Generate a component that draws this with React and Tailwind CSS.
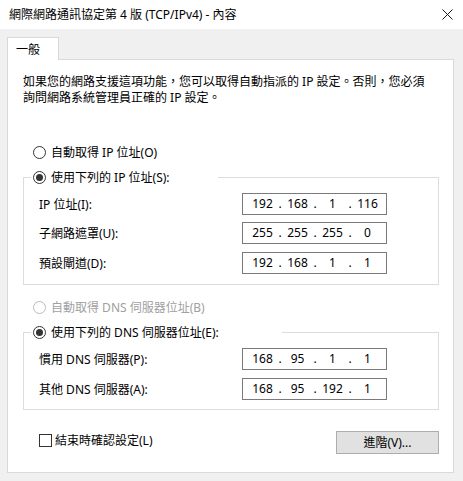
import React from "react";

function Radio({ checked, disabled }) {
  return (
    <span
      className={
        "flex h-[13px] w-[13px] shrink-0 items-center justify-center rounded-full border bg-white " +
        (disabled ? "border-[#bcbcbc]" : "border-[#333333]")
      }
    >
      {checked ? <span className="block h-[7px] w-[7px] rounded-full bg-[#333333]" /> : null}
    </span>
  );
}

function IpBox({ parts }) {
  return (
    <div className="flex h-[22px] w-[145px] items-center border border-[#7a7a7a] bg-white pl-[5px] text-[12px] leading-none text-black">
      {parts.map((p, i) => (
        <React.Fragment key={i}>
          {i > 0 ? <span className="w-[6px] text-center">.</span> : null}
          <span className="w-[29px] text-center">{p}</span>
        </React.Fragment>
      ))}
    </div>
  );
}

function FieldRow({ label, parts, className }) {
  return (
    <div className={"flex items-center justify-between pl-[15px] pr-[51px] " + (className || "")}>
      <span className="whitespace-nowrap">{label}</span>
      <IpBox parts={parts} />
    </div>
  );
}

export default function App() {
  return (
    <div className="h-[481px] w-[463px] overflow-hidden bg-[#f0f0f0] font-['Noto_Sans','Noto_Sans_CJK_TC',sans-serif] text-[12px] leading-[17px] text-black">
      {/* Title bar */}
      <div className="flex h-[29px] items-center justify-between bg-white pl-[9px] pr-[10px]">
        <span className="whitespace-nowrap text-[12px]">網際網路通訊協定第 4 版 (TCP/IPv4) - 內容</span>
        <svg width="11" height="11" viewBox="0 0 11 11">
          <path d="M0.5 0.5 L10.5 10.5 M10.5 0.5 L0.5 10.5" stroke="#1a1a1a" strokeWidth="1" fill="none" />
        </svg>
      </div>

      <div className="px-[7px] pt-[8px]">
        {/* Tab */}
        <div className="relative z-10 -mb-px flex h-[23px] w-[52px] items-center border border-b-0 border-[#d9d9d9] bg-white pl-[8px]">
          一般
        </div>
        {/* Panel */}
        <div className="h-[414px] w-[447px] border border-[#d9d9d9] bg-white pl-[15px] pr-[14px] pt-[14px]">
          <p className="whitespace-nowrap leading-[16px]">
            如果您的網路支援這項功能，您可以取得自動指派的 IP 設定。否則，您必須
            <br />
            詢問網路系統管理員正確的 IP 設定。
          </p>

          <div className="mt-[38px] flex h-[17px] items-center gap-[5px] pl-[10px]">
            <Radio />
            <span>自動取得 IP 位址(O)</span>
          </div>

          <div className="mt-[16px] border border-[#dcdcdc] pb-[10px]">
            <div className="-mt-[9px] ml-[7px] flex h-[17px] w-[187px] items-center gap-[5px] bg-white pl-[2px]">
              <Radio checked />
              <span className="whitespace-nowrap">使用下列的 IP 位址(S):</span>
            </div>
            <FieldRow className="mt-[7px]" label="IP 位址(I):" parts={["192", "168", "1", "116"]} />
            <FieldRow className="mt-[7px]" label="子網路遮罩(U):" parts={["255", "255", "255", "0"]} />
            <FieldRow className="mt-[8px]" label="預設閘道(D):" parts={["192", "168", "1", "1"]} />
          </div>

          <div className="mt-[14px] flex h-[17px] items-center gap-[5px] pl-[10px] text-[#a0a0a0]">
            <Radio disabled />
            <span>自動取得 DNS 伺服器位址(B)</span>
          </div>

          <div className="mt-[16px] border border-[#dcdcdc] pb-[9px]">
            <div className="-mt-[9px] ml-[7px] flex h-[17px] w-[251px] items-center gap-[5px] bg-white pl-[2px]">
              <Radio checked />
              <span className="whitespace-nowrap">使用下列的 DNS 伺服器位址(E):</span>
            </div>
            <FieldRow className="mt-[7px]" label="慣用 DNS 伺服器(P):" parts={["168", "95", "1", "1"]} />
            <FieldRow className="mt-[8px]" label="其他 DNS 伺服器(A):" parts={["168", "95", "192", "1"]} />
          </div>

          <div className="mt-[21px] flex items-start justify-between">
            <div className="mt-[1px] flex h-[17px] items-center gap-[3px] pl-[16px]">
              <span className="block h-[13px] w-[13px] border border-[#333333] bg-white" />
              <span>結束時確認設定(L)</span>
            </div>
            <button className="flex h-[23px] w-[103px] items-center justify-center border border-[#adadad] bg-[#e1e1e1] text-[12px] text-black">
              進階(V)...
            </button>
          </div>
        </div>
      </div>
    </div>
  );
}
